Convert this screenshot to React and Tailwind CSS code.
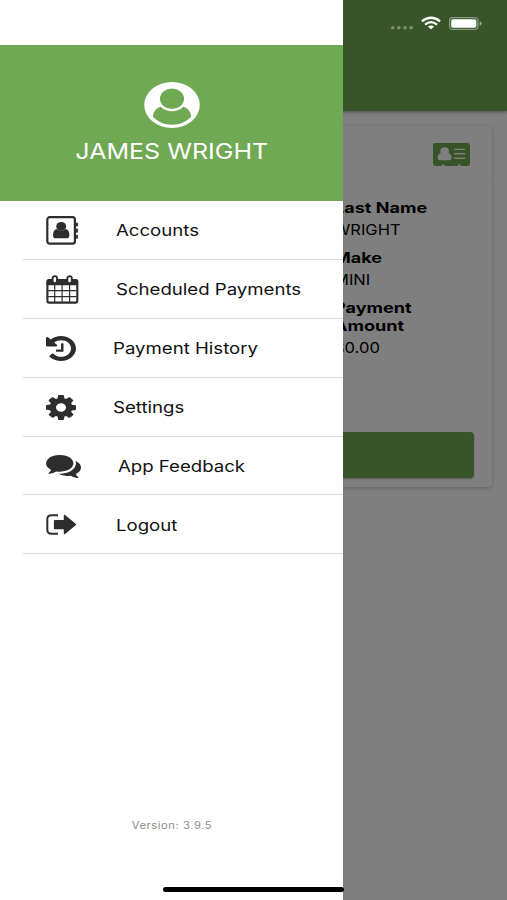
import React from 'react';

const FONT = "font-['Inter','Liberation_Sans',sans-serif]";

function AddressBookIcon() {
  return (
    <svg width="33" height="29" viewBox="0 0 33 29" fill="none">
      <rect x="1.3" y="1.2" width="27.6" height="26.4" rx="2.4" stroke="#2d2d2d" strokeWidth="2.2" />
      <path d="M29 7h2.6v3H29zM29 13h2.6v3.2H29zM29 19.2h2.6v3H29z" fill="#2d2d2d" stroke="#2d2d2d" strokeWidth="0.8" strokeLinejoin="round" />
      <ellipse cx="15.2" cy="10.4" rx="5" ry="4.3" fill="#2d2d2d" />
      <path d="M10.6 13q4.6 3.2 9.2 0q3.6.8 3.6 6.4q0 2.8-2.8 2.8H9.8q-2.8 0-2.8-2.8q0-5.6 3.6-6.4z" fill="#2d2d2d" />
    </svg>
  );
}

function CalendarIcon() {
  return (
    <svg width="33" height="29" viewBox="0 0 33 29" fill="none">
      <rect x="1.4" y="5" width="29.9" height="22.6" rx="1.8" stroke="#2d2d2d" strokeWidth="2.1" />
      <path d="M.6 6q0-1.8 2-1.8h27.5q2 0 2 1.8v4.2H.6z" fill="#2d2d2d" />
      <path d="M8.7 10v17.5M16.1 10v17.5M23.6 10v17.5M1.5 15.6h29M1.5 21.7h29" stroke="#2d2d2d" strokeWidth="1.2" />
      <rect x="6.6" y="1.1" width="4.4" height="7.2" rx="2.2" fill="#fff" stroke="#2d2d2d" strokeWidth="1.9" />
      <rect x="21.4" y="1.1" width="4.4" height="7.2" rx="2.2" fill="#fff" stroke="#2d2d2d" strokeWidth="1.9" />
    </svg>
  );
}

function HistoryIcon() {
  return (
    <svg width="30" height="25" viewBox="128 128 1536 1536" preserveAspectRatio="none" fill="#2d2d2d">
      <path d="M1664 896q0 156-61 298t-164 245-245 164-298 61q-172 0-327-72.5t-264-204.5q-7-10-6.5-22.5t8.5-20.5l137-138q10-9 25-9 16 2 23 12 73 95 179 147t225 52q104 0 198.5-40.5t163.5-109.5 109.5-163.5 40.5-198.5-40.5-198.5-109.5-163.5-163.5-109.5-198.5-40.5q-98 0-188 35.5t-160 101.5l137 138q31 30 14 69-17 40-59 40h-448q-26 0-45-19t-19-45v-448q0-42 40-59 39-17 69 14l130 129q107-101 244.5-156.5t284.5-55.5q156 0 298 61t245 164 164 245 61 298zm-640-288v448q0 14-9 23t-23 9h-320q-14 0-23-9t-9-23v-64q0-14 9-23t23-9h224v-352q0-14 9-23t23-9h64q14 0 23 9t9 23z" />
    </svg>
  );
}

function CogIcon() {
  return (
    <svg width="30" height="25" viewBox="128 128 1536 1536" preserveAspectRatio="none" fill="#2d2d2d">
      <path d="M1152 896q0-106-75-181t-181-75-181 75-75 181 75 181 181 75 181-75 75-181zm512-109v222q0 12-8 23t-20 13l-185 28q-19 54-39 91 35 50 107 138 10 12 10 25t-9 23q-27 37-99 108t-94 71q-12 0-26-9l-138-108q-44 23-91 38-16 136-29 186-7 28-36 28h-222q-14 0-24.5-8.5t-11.5-21.5l-28-184q-49-16-90-37l-141 107q-10 9-25 9-14 0-25-11-126-114-165-168-7-10-7-23 0-12 8-23 15-21 51-66.5t54-70.5q-27-50-41-99l-183-27q-13-2-21-12.5t-8-23.5v-222q0-12 8-23t19-13l186-28q14-46 39-92-40-57-107-138-10-12-10-24 0-10 9-23 26-36 98.5-107.5t94.5-71.5q13 0 26 10l138 107q44-23 91-38 16-136 29-186 7-28 36-28h222q14 0 24.5 8.5t11.5 21.5l28 184q49 16 90 37l142-107q9-9 24-9 13 0 25 10 129 119 165 170 7 8 7 22 0 12-8 23-15 21-51 66.5t-54 70.5q26 50 41 98l183 28q13 2 21 12.5t8 23.5z" />
    </svg>
  );
}

function CommentsIcon() {
  return (
    <svg width="35" height="23" viewBox="0 256 1792 1408" preserveAspectRatio="none" fill="#2d2d2d">
      <path d="M1408 768q0 139-94 257t-256.5 186.5-353.5 68.5q-86 0-176-16-124 88-278 128-36 9-86 16h-3q-11 0-20.5-8t-11.5-21q-1-3-1-6.5t.5-6.5 2-6l2.5-5 3.5-5.5 4-5 4.5-5 4-4.5q5-6 23-25t26-29.5 22.5-29 25-38.5 20.5-44q-124-72-195-177t-71-224q0-139 94-257t256.5-186.5 353.5-68.5 353.5 68.5 256.5 186.5 94 257zm384 256q0 120-71 224.5t-195 176.5q10 24 20.5 44t25 38.5 22.5 29 26 29.5 23 25q1 1 4 4.5t4.5 5 4 5 3.5 5.5l2.5 5 2 6 .5 6.5-1 6.5q-3 14-13 22t-22 7q-50-7-86-16-154-40-278-128-90 16-176 16-271 0-472-132 58 4 88 4 161 0 309-45t264-129q125-92 192-212t67-254q0-77-23-152 129 71 204 178t75 230z" />
    </svg>
  );
}

function LogoutIcon() {
  return (
    <svg width="31" height="21" viewBox="0 0 31 21" fill="none">
      <path d="M12 1.3H5.6Q1.3 1.3 1.3 5v11q0 3.7 4.3 3.7H12" stroke="#2d2d2d" strokeWidth="2" />
      <path d="M8.8 6h9V1.6q0-1.4 1.3-.5l10.6 8.6q.8.8 0 1.6l-10.6 8.6q-1.3.9-1.3-.5V15.200h-9q-.9 0-.9-.9V6.900q0-.9.9-.9z" fill="#2d2d2d" />
    </svg>
  );
}

function AvatarIcon() {
  return (
    <svg width="56" height="46" viewBox="0 0 56 46">
      <ellipse cx="28" cy="23" rx="27.800" ry="22.900" fill="#fff" />
      <ellipse cx="28" cy="16.700" rx="12" ry="10.200" fill="#6fa953" />
      <path d="M16.500 24.800q4.800 4.400 11.500 4.400t11.500-4.400q6.400 1.400 7.700 9.700q-7.300 8.300-19.200 8.300T8.800 34.500q1.300-8.300 7.700-9.700z" fill="#6fa953" />
    </svg>
  );
}

// Contact card shown in the account header
function IdCardIcon() {
  return (
    <svg width="37" height="23" viewBox="0 0 37 23">
      <rect width="37" height="23" rx="2.4" fill="#6fa953" />
      <ellipse cx="11.6" cy="8" rx="4.3" ry="3.800" fill="#fff" />
      <path d="M8 10q3.600 2.600 7.200 0q3.300.8 3.300 5q0 2.200-2.200 2.200H6.900q-2.200 0-2.200-2.200q0-4.200 3.300-5z" fill="#fff" />
      <path d="M21 6.400h11.200M21 10.800h11.200M21 15.200h11.200" stroke="#fff" strokeWidth="1.400" />
      <path d="M9 23v-1.500h2.400V23zM25.200 23v-1.500h2.400V23z" fill="#fff" />
    </svg>
  );
}

function StatusIcons() {
  return (
    <svg width="92" height="16" viewBox="0 0 92 16" fill="none">
      <g fill="#fff" opacity="0.35">
        <circle cx="2.8" cy="11.7" r="1.8" />
        <circle cx="8.9" cy="11.7" r="1.8" />
        <circle cx="15" cy="11.7" r="1.8" />
        <circle cx="21.1" cy="11.7" r="1.8" />
      </g>
      <g stroke="#fff" strokeWidth="2.3">
        <path d="M31.900 5.300Q41 -1.700 50.100 5.300" />
        <path d="M35 8.600Q41 3.700 47 8.600" />
      </g>
      <path d="M37.800 10.600Q41 8.200 44.200 10.600L41 13.300z" fill="#fff" />
      <rect x="59.600" y="1.600" width="28.400" height="11.800" rx="3.200" stroke="#fff" strokeOpacity="0.4" strokeWidth="1.300" />
      <rect x="61.200" y="3.200" width="25.200" height="8.600" rx="1.800" fill="#fff" />
      <path d="M89.700 5.300q2 .6 2 2.200t-2 2.200z" fill="#fff" fillOpacity="0.500" />
    </svg>
  );
}

const MENU_ITEMS = [
  { label: 'Accounts', Icon: AddressBookIcon, indent: 'ml-[92.5px]' },
  { label: 'Scheduled Payments', Icon: CalendarIcon, indent: 'ml-[92.5px]' },
  { label: 'Payment History', Icon: HistoryIcon, indent: 'ml-[90px]' },
  { label: 'Settings', Icon: CogIcon, indent: 'ml-[90px]' },
  { label: 'App Feedback', Icon: CommentsIcon, indent: 'ml-[95px]' },
  { label: 'Logout', Icon: LogoutIcon, indent: 'ml-[92.5px]' },
];

const TERM = 'origin-left scale-x-[1.245] font-bold';
const VALUE = 'mt-[4px] origin-left scale-x-[1.14]';

function AccountPage() {
  return (
    <div className="flex h-[900px] flex-col bg-white">
      <header className="h-[111px] shrink-0 bg-[#70aa53] shadow-[0_1px_3px_rgba(0,0,0,0.4)]" />
      <section className="mt-[15px] mr-[15px] ml-[15px] flex h-[361px] flex-col rounded-sm bg-white shadow-[0_1px_4px_rgba(0,0,0,0.22)]">
        <div className="flex h-[57px] shrink-0 items-center justify-end border-b border-[#f6f6f6] pr-[22px]">
          <IdCardIcon />
        </div>
        <dl className="ml-[319px] w-[110px] pt-[16px] text-[14.5px] leading-[18px] text-black">
          <dt className={TERM}>Last Name</dt>
          <dd className={VALUE}>WRIGHT</dd>
          <dt className={`mt-[10px] ${TERM}`}>Make</dt>
          <dd className={VALUE}>MINI</dd>
          <dt className={`mt-[10px] ${TERM}`}>
            Payment
            <br />
            Amount
          </dt>
          <dd className={VALUE}>$0.00</dd>
        </dl>
        <div className="mt-auto mr-[18px] mb-[9px] ml-[18px] h-[46px] rounded-sm bg-[#70aa53] shadow-[0_1px_2px_rgba(0,0,0,0.3)]" />
      </section>
    </div>
  );
}

function Drawer() {
  return (
    <aside className="absolute inset-y-0 left-0 flex w-[343px] flex-col bg-white">
      <div className="mt-[45px] flex h-[156px] shrink-0 flex-col items-center bg-[#6fa953] pt-[37px]">
        <AvatarIcon />
        <div className="mt-[8px] scale-x-[1.165] text-[21.5px] leading-[30px] whitespace-nowrap text-white">
          JAMES WRIGHT
        </div>
      </div>
      <nav className="ml-[23px] flex flex-col">
        {MENU_ITEMS.map(({ label, Icon, indent }) => (
          <a key={label} className="grid h-[58.9px] items-center border-b border-[#d9d9d9]">
            <span className="col-start-1 row-start-1 pt-px pl-[23px]">
              <Icon />
            </span>
            <span className={`col-start-1 row-start-1 pt-px ${indent}`}>
              <span className="inline-block origin-left scale-x-[1.163] text-[16px] leading-[22px] whitespace-nowrap text-[#111]">
                {label}
              </span>
            </span>
          </a>
        ))}
      </nav>
      <div className="mt-auto mb-[68px] flex justify-center">
        <span className="scale-x-[1.12] text-[10px] leading-[14px] tracking-[0.5px] text-[#8c8c8c]">Version: 3.9.5</span>
      </div>
    </aside>
  );
}

export default function App() {
  return (
    <div className={`relative h-[900px] w-[507px] overflow-hidden ${FONT}`}>
      <AccountPage />
      <div className="absolute inset-0 bg-black/50" />
      <div className="absolute top-[16px] left-[390px]">
        <StatusIcons />
      </div>
      <Drawer />
      {/* Home indicator */}
      <div className="absolute bottom-[8px] left-[163px] h-[5px] w-[181px] rounded-full bg-black" />
    </div>
  );
}
